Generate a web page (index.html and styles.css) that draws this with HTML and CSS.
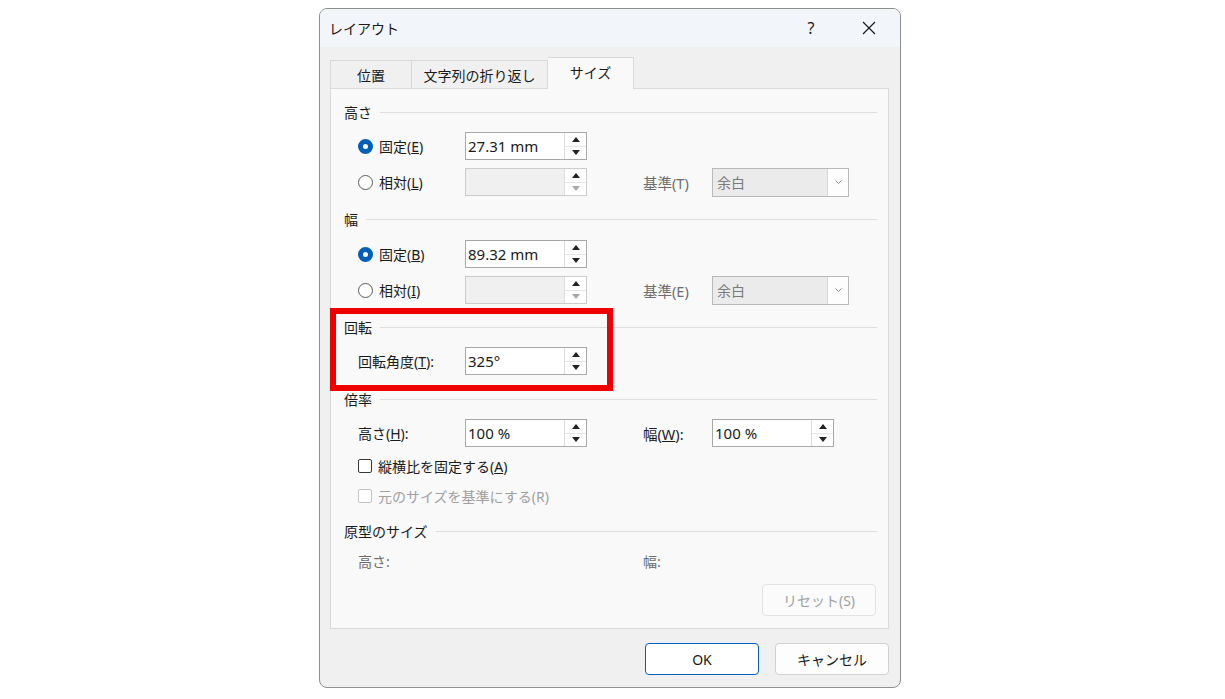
FILE: index.html
```html
<!DOCTYPE html>
<html lang="ja">
<head>
  <meta charset="UTF-8" />
  <meta name="viewport" content="width=device-width, initial-scale=1.0" />
  <title>レイアウト</title>
  <link rel="stylesheet" href="styles.css">
</head>
<body>

  <div class="dialog">
    <!-- Title bar -->
    <div class="titlebar">
      <span class="title">レイアウト</span>
      <span class="help">?</span>
      <span class="close">
        <svg width="14" height="14" viewBox="0 0 14 14"><path d="M1 1L13 13M13 1L1 13" stroke="#1a1a1a" stroke-width="1.2" fill="none"/></svg>
      </span>
    </div>

    <div class="content">
      <div class="tabs">
        <div class="tab tab-pos">位置</div>
        <div class="tab tab-wrap">文字列の折り返し</div>
        <div class="tab tab-size active">サイズ</div>
      </div>

      <div class="panel">
        <!-- Height -->
        <div class="group-head">高さ</div>
        <div class="row gap10">
          <label class="opt"><span class="radio on"></span><span>固定(<u>E</u>)</span></label>
          <div class="spin">
            <span class="val">27.31 mm</span>
            <span class="arrows"><span class="arr up"></span><span class="arr down"></span></span>
          </div>
        </div>
        <div class="row gap8">
          <label class="opt"><span class="radio"></span><span>相対(<u>L</u>)</span></label>
          <div class="spin off">
            <span class="val"></span>
            <span class="arrows"><span class="arr up"></span><span class="arr down dim"></span></span>
          </div>
          <span class="ref-label">基準(T)</span>
          <div class="combo"><span class="cval">余白</span><span class="cbtn"><svg width="9" height="6" viewBox="0 0 9 6"><path d="M1.5 1.5L4.5 4.5L7.5 1.5" stroke="#8a8a8a" stroke-width="1" fill="none"/></svg></span></div>
        </div>

        <!-- Width -->
        <div class="group-head gap13">幅</div>
        <div class="row gap11">
          <label class="opt"><span class="radio on"></span><span>固定(<u>B</u>)</span></label>
          <div class="spin">
            <span class="val">89.32 mm</span>
            <span class="arrows"><span class="arr up"></span><span class="arr down"></span></span>
          </div>
        </div>
        <div class="row gap8">
          <label class="opt"><span class="radio"></span><span>相対(<u>I</u>)</span></label>
          <div class="spin off">
            <span class="val"></span>
            <span class="arrows"><span class="arr up"></span><span class="arr down dim"></span></span>
          </div>
          <span class="ref-label">基準(E)</span>
          <div class="combo"><span class="cval">余白</span><span class="cbtn"><svg width="9" height="6" viewBox="0 0 9 6"><path d="M1.5 1.5L4.5 4.5L7.5 1.5" stroke="#8a8a8a" stroke-width="1" fill="none"/></svg></span></div>
        </div>

        <!-- Rotation -->
        <div class="group-head gap13">回転</div>
        <div class="row gap10">
          <label class="opt plain"><span>回転角度(<u>T</u>):</span></label>
          <div class="spin">
            <span class="val">325°</span>
            <span class="arrows"><span class="arr up"></span><span class="arr down"></span></span>
          </div>
        </div>

        <!-- Scale -->
        <div class="group-head gap14">倍率</div>
        <div class="row gap10">
          <label class="opt plain"><span>高さ(<u>H</u>):</span></label>
          <div class="spin">
            <span class="val">100 %</span>
            <span class="arrows"><span class="arr up"></span><span class="arr down"></span></span>
          </div>
          <span class="ref-label dark">幅(<u>W</u>):</span>
          <div class="spin">
            <span class="val">100 %</span>
            <span class="arrows"><span class="arr up"></span><span class="arr down"></span></span>
          </div>
        </div>
        <div class="check-row gap9">
          <span class="box"></span><span>縦横比を固定する(<u>A</u>)</span>
        </div>
        <div class="check-row gap10 disabled">
          <span class="box"></span><span>元のサイズを基準にする(R)</span>
        </div>

        <!-- Original size -->
        <div class="group-head gap15">原型のサイズ</div>
        <div class="info-row gap10">
          <span class="info-label">高さ:</span>
          <span class="info-label">幅:</span>
        </div>
        <div class="reset-row">
          <button class="btn reset">リセット(S)</button>
        </div>
      </div>

      <div class="footer">
        <button class="btn ok">OK</button>
        <button class="btn">キャンセル</button>
      </div>
    </div>

    <!-- highlight frame around the rotation group -->
    <div class="mark"></div>
  </div>

</body>
</html>
```

FILE: styles.css
```css
body {
  margin: 0;
  padding: 8px 0 0 319px;
  background: #ffffff;
  font-family: "Noto Sans", "Noto Sans CJK JP", sans-serif;
  font-size: 14px;
  color: #1a1a1a;
}
.dialog {
  position: relative;
  width: 582px;
  height: 680px;
  box-sizing: border-box;
  background: #f0f0f0;
  border: 1px solid #8e8e8e;
  border-radius: 8px;
  overflow: hidden;
}
/* Title bar */
.titlebar {
  height: 38px;
  background: #f2f5f9;
  display: flex;
  align-items: center;
  padding-left: 9px;
}
.title {
  flex: 1;
  font-size: 14px;
}
.help {
  width: 20px;
  text-align: center;
  font-size: 16px;
  margin-right: 38px;
}
.close {
  width: 20px;
  display: flex;
  justify-content: center;
  margin-right: 21px;
}
.content {
  padding: 10px 11px 0 10px;
}
/* Tabs */
.tabs {
  display: flex;
  align-items: flex-end;
  height: 31px;
}
.tab {
  height: 28px;
  box-sizing: border-box;
  display: flex;
  align-items: center;
  justify-content: center;
  border: 1px solid #d9d9d9;
  border-bottom: none;
  background: #f0f0f0;
}
.tab-pos { width: 82px; }
.tab-wrap { width: 136px; border-left: none; }
.tab-size { width: 86px; }
.tab.active {
  height: 32px;
  background: #f9f9f9;
  margin-bottom: -1px;
  position: relative;
  z-index: 1;
  border-left: none;
  padding-bottom: 3px;
}
.panel {
  height: 541px;
  box-sizing: border-box;
  background: #f9f9f9;
  border: 1px solid #dadada;
  padding: 13px 11px 0 13px;
}
/* Group headers with a rule after the label */
.group-head {
  height: 20px;
  display: flex;
  align-items: center;
  gap: 8px;
}
.group-head::after {
  content: "";
  flex: 1;
  border-top: 1px solid #dedede;
}
.gap8 { margin-top: 8px; }
.gap9 { margin-top: 9px; }
.gap10 { margin-top: 10px; }
.gap11 { margin-top: 11px; }
.gap13 { margin-top: 13px; }
.gap14 { margin-top: 14px; }
.gap15 { margin-top: 15px; }
.row {
  display: flex;
  align-items: center;
  height: 28px;
  padding-left: 14px;
}
.opt {
  width: 107px;
  flex: none;
  display: flex;
  align-items: center;
  gap: 6px;
}
.radio {
  width: 15px;
  height: 15px;
  box-sizing: border-box;
  border: 1px solid #5a5a5a;
  border-radius: 50%;
  background: #fff;
}
.radio.on {
  border: 5px solid #005fb8;
  background: #fff;
}
/* Spin box */
.spin {
  width: 122px;
  height: 28px;
  flex: none;
  box-sizing: border-box;
  display: flex;
  background: #fff;
  border: 1px solid #a8a8a8;
}
.spin .val {
  flex: 1;
  display: flex;
  align-items: center;
  padding-left: 2px;
  font-size: 15px;
}
.spin.off {
  background: #f0f0f0;
  border-color: #cccccc;
}
.arrows {
  width: 21px;
  display: flex;
  flex-direction: column;
  border-left: 1px solid #dcdcdc;
  background: #fff;
}
.arr {
  flex: 1;
  display: flex;
  align-items: center;
  justify-content: center;
}
.arr.up { border-bottom: 1px solid #e6e6e6; }
.arr::before {
  content: "";
  border-left: 4px solid transparent;
  border-right: 4px solid transparent;
}
.arr.up::before { border-bottom: 5px solid #222; }
.arr.down::before { border-top: 5px solid #222; }
.arr.down.dim::before { border-top-color: #a8a8a8; }
.ref-label {
  width: 69px;
  flex: none;
  margin-left: 56px;
  color: #6d6d6d;
  font-size: 14.5px;
}
.ref-label.dark { color: #1a1a1a; }
/* Disabled combo box */
.combo {
  width: 137px;
  height: 29px;
  flex: none;
  box-sizing: border-box;
  display: flex;
  background: #ebebeb;
  border: 1px solid #b9b9b9;
  color: #7a7a7a;
}
.cval {
  flex: 1;
  display: flex;
  align-items: center;
  padding-left: 4px;
}
.cbtn {
  width: 20px;
  display: flex;
  align-items: center;
  justify-content: center;
  background: #fdfdfd;
  border-left: 1px solid #d6d6d6;
}
/* Checkboxes */
.check-row {
  height: 20px;
  display: flex;
  align-items: center;
  gap: 6px;
  padding-left: 14px;
}
.box {
  width: 14px;
  height: 14px;
  box-sizing: border-box;
  border: 1px solid #3a3a3a;
  border-radius: 2px;
  background: #fff;
}
.check-row.disabled { color: #a0a0a0; }
.check-row.disabled .box { border-color: #c4c4c4; }
.info-row {
  height: 20px;
  display: flex;
  align-items: center;
  padding-left: 14px;
  color: #6d6d6d;
}
.info-label {
  width: 285px;
  flex: none;
}
.reset-row {
  display: flex;
  justify-content: flex-end;
  margin-top: 13px;
  padding-right: 1px;
}
/* Buttons */
.btn {
  width: 114px;
  height: 32px;
  box-sizing: border-box;
  font-family: inherit;
  font-size: 14px;
  color: #1a1a1a;
  background: #fdfdfd;
  border: 1px solid #d0d0d0;
  border-radius: 4px;
  padding: 0;
}
.btn.reset {
  color: #a0a0a0;
  border-color: #e3e3e3;
  background: #fbfbfb;
}
.btn.ok {
  border-color: #005fb8;
  background: #fff;
}
.footer {
  display: flex;
  justify-content: flex-end;
  gap: 16px;
  margin-top: 14px;
}
/* Red highlight frame */
.mark {
  position: absolute;
  left: 10px;
  top: 299px;
  width: 283px;
  height: 83px;
  box-sizing: border-box;
  border: 6px solid #ee0000;
}
```
